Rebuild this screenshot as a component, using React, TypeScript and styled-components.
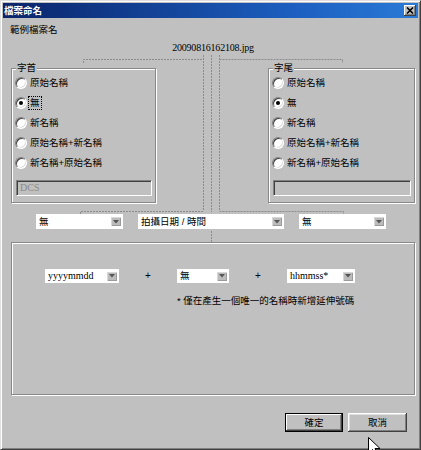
import React from "react";
import styled, { createGlobalStyle, css } from "styled-components";

const Global = createGlobalStyle`
  html, body { margin: 0; padding: 0; background: #c0c0c0; }
  body { width: 421px; height: 450px; overflow: hidden; }
  * { box-sizing: border-box; }
`;

const CJK = `"Liberation Sans", "Noto Sans CJK TC", sans-serif`;
const SERIF = `"Liberation Serif", "Noto Sans CJK TC", serif`;

const Page = styled.div`
  position: relative;
  width: 421px;
  height: 450px;
  overflow: hidden;
  font-family: ${CJK};
  font-size: 9.5px;
  color: #000;
`;

const Window = styled.div`
  width: 421px;
  height: 450px;
  background: #c0c0c0;
  border: 1px solid;
  border-color: #dfdfdf #404040 #404040 #dfdfdf;
  box-shadow: inset 1px 1px #fff, inset -1px -1px #808080;
  padding: 2px;
  display: flex;
  flex-direction: column;
`;

const TitleBar = styled.div`
  height: 15px;
  background: linear-gradient(to right, #0a246a 0%, #1c5fc0 70%, #2a7ad6 100%);
  display: flex;
  align-items: center;
  justify-content: space-between;
  padding: 0 2px 0 1px;
`;

const TitleText = styled.span`
  color: #fff;
  font-weight: bold;
  font-size: 9.5px;
  line-height: 12px;
`;

const CloseButton = styled.div`
  width: 12px;
  height: 11px;
  background: #c0c0c0;
  box-shadow: inset -1px -1px #404040, inset 1px 1px #fff, inset -2px -2px #808080;
  display: flex;
  align-items: center;
  justify-content: center;
`;

const Body = styled.div`
  flex: 1;
  display: flex;
  flex-direction: column;
  padding: 0 3px 0 8px;
`;

const SampleLabel = styled.div`
  margin: 6px 0 0 -1px;
  line-height: 12px;
`;

const FileName = styled.div`
  margin-top: 6px;
  line-height: 12px;
  text-align: center;
  font-family: ${SERIF};
  font-size: 10px;
  letter-spacing: -0.2px;
`;

const GroupRow = styled.div`
  margin-top: 14px;
  display: flex;
  justify-content: space-between;
`;

const etched = css`
  border: 1px solid #888;
  box-shadow: 1px 1px 0 #fff, inset 1px 1px 0 #fff;
`;

const GroupBox = styled.div<{ $w: number }>`
  position: relative;
  width: ${(p) => p.$w}px;
  height: 135px;
  ${etched};
  padding: 4px 3px 0 3px;
  display: flex;
  flex-direction: column;
`;

const Legend = styled.span`
  position: absolute;
  top: -7px;
  left: 4px;
  padding: 0 1px;
  background: #c0c0c0;
  line-height: 12px;
`;

const RadioRow = styled.div`
  height: 20px;
  display: flex;
  align-items: center;
  gap: 2px;
`;

const RadioCircle = styled.span<{ $checked?: boolean }>`
  position: relative;
  width: 12px;
  height: 12px;
  border-radius: 50%;
  background: #fff;
  border: 1px solid;
  border-color: #808080 #fff #fff #808080;
  box-shadow: inset 1px 1px #404040, inset -1px -1px #dfdfdf;
  flex: none;
  &::after {
    content: "";
    display: ${(p) => (p.$checked ? "block" : "none")};
    position: absolute;
    left: 3px;
    top: 3px;
    width: 4px;
    height: 4px;
    border-radius: 50%;
    background: #000;
  }
`;

const RadioLabel = styled.span<{ $focus?: boolean }>`
  line-height: 12px;
  padding: 0 1px;
  ${(p) => p.$focus && css`outline: 1px dotted #000;`}
`;

const TextField = styled.div`
  margin: 7px 0 0 1px;
  height: 16px;
  border: 1px solid;
  border-color: #808080 #fff #fff #808080;
  box-shadow: inset 1px 1px #404040;
  background: #c0c0c0;
  font-family: ${SERIF};
  font-size: 10px;
  color: #8a8a8a;
  line-height: 14px;
  padding-left: 3px;
`;

const DropRow = styled.div`
  margin-top: 11px;
  display: flex;
  gap: 15px;
  padding-left: 25px;
`;

const Select = styled.div<{ $w: number; $h?: number; $serif?: boolean }>`
  width: ${(p) => p.$w}px;
  height: ${(p) => p.$h ?? 15}px;
  background: #fff;
  display: flex;
  align-items: center;
  justify-content: space-between;
  padding: 0 2px 0 3px;
  font-family: ${(p) => (p.$serif ? SERIF : CJK)};
  font-size: ${(p) => (p.$serif ? "10px" : "9.5px")};
  line-height: 12px;
`;

const ArrowBox = styled.span`
  width: 10px;
  height: 9px;
  background: #bcbcbc;
  box-shadow: inset 1px 1px #d8d8d8, inset -1px -1px #9a9a9a;
  display: flex;
  align-items: center;
  justify-content: center;
  flex: none;
`;

const Panel = styled.div`
  margin-top: 13px;
  height: 153px;
  ${etched};
  padding: 26px 0 0 33px;
  display: flex;
  flex-direction: column;
`;

const InnerRow = styled.div`
  display: flex;
  align-items: center;
  height: 14px;
`;

const Plus = styled.span`
  width: 58px;
  text-align: center;
  font-size: 10px;
  line-height: 12px;
`;

const Note = styled.div`
  margin: 12px 0 0 132px;
  line-height: 12px;
`;

const ButtonRow = styled.div`
  margin-top: 18px;
  display: flex;
  justify-content: flex-end;
  gap: 5px;
  padding-right: 8px;
`;

const Button = styled.div<{ $w: number; $default?: boolean }>`
  width: ${(p) => p.$w}px;
  height: 19px;
  background: #c0c0c0;
  display: flex;
  align-items: center;
  justify-content: center;
  line-height: 12px;
  ${(p) =>
    p.$default
      ? css`
          border: 1px solid #000;
          box-shadow: inset -1px -1px #404040, inset 1px 1px #fff, inset -2px -2px #808080;
        `
      : css`
          box-shadow: inset -1px -1px #404040, inset 1px 1px #fff, inset -2px -2px #808080, inset 2px 2px #dfdfdf;
        `}
`;

const Overlay = styled.svg`
  position: absolute;
  left: 0;
  top: 0;
  pointer-events: none;
`;

const Cursor = styled.svg`
  position: absolute;
  left: 368px;
  top: 437px;
  pointer-events: none;
`;

const Arrow = () => (
  <ArrowBox>
    <svg width="6" height="4" viewBox="0 0 6 4">
      <path d="M0 0H6L3 3.5Z" fill="#555" />
    </svg>
  </ArrowBox>
);

const options = ["原始名稱", "無", "新名稱", "原始名稱+新名稱", "新名稱+原始名稱"];

const Group = ({ title, w, focus, value }: { title: string; w: number; focus?: boolean; value: string }) => (
  <GroupBox $w={w}>
    <Legend>{title}</Legend>
    {options.map((o) => (
      <RadioRow key={o}>
        <RadioCircle $checked={o === "無"} />
        <RadioLabel $focus={focus && o === "無"}>{o}</RadioLabel>
      </RadioRow>
    ))}
    <TextField>{value}</TextField>
  </GroupBox>
);

export default function App() {
  return (
    <Page>
      <Global />
      <Window>
        <TitleBar>
          <TitleText>檔案命名</TitleText>
          <CloseButton>
            <svg width="8" height="7" viewBox="0 0 8 7">
              <path d="M1 0.5L7 6.5M7 0.5L1 6.5" stroke="#000" strokeWidth="1.6" />
            </svg>
          </CloseButton>
        </TitleBar>
        <Body>
          <SampleLabel>範例檔案名</SampleLabel>
          <FileName>20090816162108.jpg</FileName>
          <GroupRow>
            <Group title="字首" w={145} focus value="DCS" />
            <Group title="字尾" w={147} value="" />
          </GroupRow>
          <DropRow>
            <Select $w={87}>
              <span>無</span>
              <Arrow />
            </Select>
            <Select $w={146}>
              <span>拍攝日期 / 時間</span>
              <Arrow />
            </Select>
            <Select $w={87}>
              <span>無</span>
              <Arrow />
            </Select>
          </DropRow>
          <Panel>
            <InnerRow>
              <Select $w={74} $h={14} $serif>
                <span>yyyymmdd</span>
                <Arrow />
              </Select>
              <Plus>+</Plus>
              <Select $w={52} $h={14}>
                <span>無</span>
                <Arrow />
              </Select>
              <Plus>+</Plus>
              <Select $w={68} $h={14} $serif>
                <span>hhmmss*</span>
                <Arrow />
              </Select>
            </InnerRow>
            <Note>* 僅在產生一個唯一的名稱時新增延伸號碼</Note>
          </Panel>
          <ButtonRow>
            <Button $w={58} $default>確定</Button>
            <Button $w={59}>取消</Button>
          </ButtonRow>
        </Body>
      </Window>
      <Overlay width="421" height="450" viewBox="0 0 421 450">
        <g fill="none" stroke="#8c8c8c" strokeWidth="1" strokeDasharray="2 1">
          <path d="M83.5 63V59.5H203.5" />
          <path d="M219.5 59.5H342.5V63" />
          <path d="M203.5 55V211" />
          <path d="M211.5 55V212" />
          <path d="M219.5 55V211" />
          <path d="M80.5 214V211.5H203.5" />
          <path d="M219.5 211.5H343.5V214" />
          <path d="M211.5 231V242" />
        </g>
      </Overlay>
      <Cursor width="14" height="20" viewBox="0 0 14 20">
        <path d="M0.5 0.5V16.5L4.5 12.5L7 18.5L9.5 17.5L7 11.5H12Z" fill="#fff" stroke="#000" strokeWidth="1" />
      </Cursor>
    </Page>
  );
}
